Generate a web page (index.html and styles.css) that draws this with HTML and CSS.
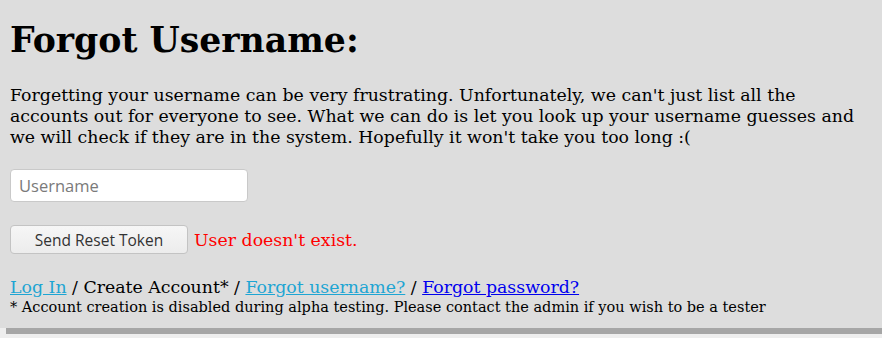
FILE: index.html
```html
<!DOCTYPE html>
<html>
<head>
<meta charset="utf-8">
<link rel="stylesheet" href="styles.css">
</head>
<body>
<div class="page">
  <h1 class="title">Forgot Username:</h1>
  <p class="intro">Forgetting your username can be very frustrating. Unfortunately, we can't just list all the accounts out for everyone to see. What we can do is let you look up your username guesses and we will check if they are in the system. Hopefully it won't take you too long :(</p>
  <form class="form">
    <input class="field" type="text" placeholder="Username">
    <div class="actions">
      <button class="btn" type="button">Send Reset Token</button>
      <span class="error">User doesn't exist.</span>
    </div>
  </form>
  <div class="nav">
    <a class="link" href="#">Log In</a> / Create Account* / <a class="link" href="#">Forgot username?</a> / <a class="link-default" href="#">Forgot password?</a>
  </div>
  <div class="note">* Account creation is disabled during alpha testing. Please contact the admin if you wish to be a tester</div>
</div>
<div class="bar"></div>
</body>
</html>
```
FILE: styles.css
```css
html, body {
  margin: 0;
  padding: 0;
  background: #eeeeee;
}
body {
  font-family: "DejaVu Serif", serif;
  font-size: 17.33px;
  color: #000;
}
.page {
  background: #dddddd;
  padding: 1px 10px 12px 10px;
}
.title {
  font-size: 34.67px;
  font-weight: bold;
  margin: 18px 0 24px 0;
  line-height: 42px;
}
.intro {
  font-size: 17.33px;
  line-height: 21px;
  margin: 0 0 21px 0;
}
.form {
  margin: 0;
}
.field {
  display: block;
  box-sizing: border-box;
  width: 238px;
  height: 33px;
  border: 1px solid #c9c9c9;
  border-radius: 4px;
  background: #fff;
  padding: 0 8px;
  font-family: "Open Sans", sans-serif;
  font-size: 16.5px;
  color: #333;
  margin: 0 0 23px 0;
}
.field::placeholder {
  color: #7a7a7a;
}
.actions {
  display: flex;
  align-items: center;
  gap: 6px;
}
.btn {
  box-sizing: border-box;
  width: 178px;
  height: 29px;
  border: 1px solid #c3c3c3;
  border-radius: 4px;
  background: linear-gradient(#f6f6f6, #ececec);
  font-family: "Open Sans", sans-serif;
  font-size: 15.5px;
  color: #333;
  padding: 0;
}
.error {
  color: #ff0000;
  font-size: 17.33px;
}
.nav {
  margin-top: 22px;
  font-size: 17.33px;
  line-height: 22px;
}
.link {
  color: #1ea5d3;
}
.link-default {
  color: #0000ee;
}
.note {
  font-size: 14.5px;
  line-height: 18px;
}
.bar {
  margin-left: 6px;
  height: 6px;
  background: #a6a6a6;
}
```
